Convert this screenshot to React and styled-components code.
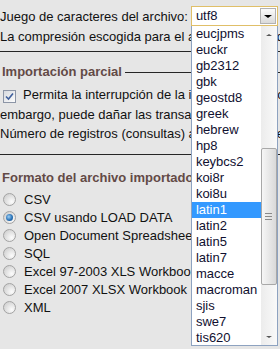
import React from 'react';
import styled, { createGlobalStyle } from 'styled-components';

const GlobalStyle = createGlobalStyle`
  html {
    overflow: hidden;
    background: #e6e6e6;
  }
  body {
    margin: 0;
    padding: 0;
    min-height: 100vh;
    font-family: "Liberation Sans", Arial, sans-serif;
    font-size: 13px;
    color: #111;
  }
`;

const Page = styled.div`
  width: 1000px;
`;

const Section = styled.div`
  border-bottom: ${({ $ruled }) => ($ruled ? '1px solid #262626' : 'none')};
  padding-bottom: ${({ $pb }) => $pb || 0}px;
`;

const CharsetRow = styled.div`
  display: flex;
  align-items: center;
  padding-top: 6px;
  height: 20px;
`;

const Line = styled.div`
  white-space: nowrap;
  line-height: 20px;
  margin-top: ${({ $mt }) => $mt || 0}px;
`;

const SelectWrap = styled.div`
  position: relative;
  width: 87px;
  height: 20px;
  margin-left: 3px;
  z-index: 2;
`;

const SelectBox = styled.div`
  box-sizing: border-box;
  height: 20px;
  border: 1px solid #e0bf68;
  background: #fff;
  display: flex;
  align-items: center;
`;

const SelectValue = styled.span`
  flex: 1;
  padding-left: 4px;
  line-height: 18px;
  color: #101030;
`;

const DropButton = styled.span`
  box-sizing: border-box;
  width: 16px;
  height: 16px;
  margin-right: 1px;
  border: 1px solid #b2b2b2;
  background: linear-gradient(#fbfbfb, #dadada);
  display: flex;
  align-items: center;
  justify-content: center;
`;

const Arrow = styled.span`
  width: 0;
  height: 0;
  border-left: ${({ $size }) => $size}px solid transparent;
  border-right: ${({ $size }) => $size}px solid transparent;
  ${({ $up, $size, $color }) =>
    $up
      ? `border-bottom: ${$size - 1}px solid ${$color};`
      : `border-top: ${$size - 1}px solid ${$color};`}
`;

const DropList = styled.div`
  position: absolute;
  top: 100%;
  left: 0;
  box-sizing: border-box;
  width: 87px;
  height: 320px;
  border: 1px solid #8da2c0;
  border-top: none;
  background: #fff;
  display: flex;
`;

const Options = styled.div`
  flex: 1;
  overflow: hidden;
`;

const Option = styled.div`
  height: 16px;
  line-height: 16px;
  padding-left: 4px;
  white-space: nowrap;
  background: ${({ $active }) => ($active ? '#3399ff' : 'transparent')};
  color: ${({ $active }) => ($active ? '#fff' : '#101030')};
`;

const ScrollBar = styled.div`
  width: 16px;
  display: flex;
  flex-direction: column;
  background: linear-gradient(to right, #ececec, #f9f9f9);
`;

const ScrollButton = styled.div`
  height: 17px;
  display: flex;
  align-items: center;
  justify-content: center;
`;

const Track = styled.div`
  flex: 1;
  padding-top: 105px;
`;

const Thumb = styled.div`
  box-sizing: border-box;
  height: 137px;
  border: 1px solid #a8a8a8;
  border-radius: 2px;
  background: linear-gradient(to right, #f6f6f6, #d9d9d9);
  display: flex;
  align-items: center;
  justify-content: center;
`;

const Grip = styled.span`
  width: 7px;
  height: 7px;
  background: repeating-linear-gradient(#8a8a8a 0 1px, transparent 1px 3px);
`;

const LegendRow = styled.div`
  display: flex;
  align-items: center;
  margin-top: ${({ $mt }) => $mt}px;
  line-height: 20px;
`;

const Legend = styled.span`
  font-weight: bold;
  color: #634a46;
  padding-left: 2px;
  white-space: nowrap;
`;

const Rule = styled.span`
  flex: 1;
  height: 1px;
  background: #262626;
  margin-left: 3px;
`;

const Paragraph = styled.div`
  white-space: nowrap;
  line-height: 19.5px;
  margin-top: 3px;
`;

const CheckBox = styled.span`
  display: inline-flex;
  align-items: center;
  justify-content: center;
  box-sizing: border-box;
  width: 13px;
  height: 13px;
  margin: 0 7px 0 3px;
  vertical-align: -2px;
  border: 1px solid #8c95a6;
  background: linear-gradient(135deg, #d6d9de, #fdfdfd);
`;

const RadioList = styled.div`
  margin-top: 2px;
`;

const RadioRow = styled.div`
  display: flex;
  align-items: center;
  height: 18px;
  white-space: nowrap;
`;

const Radio = styled.span`
  box-sizing: border-box;
  width: 13px;
  height: 13px;
  margin: 0 8px 0 3px;
  border-radius: 50%;
  border: 1px solid #a3a3a3;
  background: radial-gradient(circle at 70% 70%, #fcfcfc, #d2d2d2 80%);
  display: flex;
  align-items: center;
  justify-content: center;
  &::after {
    content: '';
    display: ${({ $checked }) => ($checked ? 'block' : 'none')};
    width: 7px;
    height: 7px;
    border-radius: 50%;
    background: radial-gradient(circle at 40% 40%, #9fd0f5, #2a73b8 55%, #17497e);
  }
`;

const charsets = [
  'eucjpms', 'euckr', 'gb2312', 'gbk', 'geostd8', 'greek', 'hebrew', 'hp8',
  'keybcs2', 'koi8r', 'koi8u', 'latin1', 'latin2', 'latin5', 'latin7',
  'macce', 'macroman', 'sjis', 'swe7', 'tis620',
];

const formats = [
  { label: 'CSV' },
  { label: 'CSV usando LOAD DATA', checked: true },
  { label: 'Open Document Spreadsheet' },
  { label: 'SQL' },
  { label: 'Excel 97-2003 XLS Workbook' },
  { label: 'Excel 2007 XLSX Workbook' },
  { label: 'XML' },
];

function CharsetSelect() {
  return (
    <SelectWrap>
      <SelectBox>
        <SelectValue>utf8</SelectValue>
        <DropButton>
          <Arrow $size={4} $color="#000" />
        </DropButton>
      </SelectBox>
      <DropList>
        <Options>
          {charsets.map((c) => (
            <Option key={c} $active={c === 'latin1'}>
              {c}
            </Option>
          ))}
        </Options>
        <ScrollBar>
          <ScrollButton>
            <Arrow $up $size={3} $color="#555" />
          </ScrollButton>
          <Track>
            <Thumb>
              <Grip />
            </Thumb>
          </Track>
          <ScrollButton>
            <Arrow $size={3} $color="#555" />
          </ScrollButton>
        </ScrollBar>
      </DropList>
    </SelectWrap>
  );
}

export default function App() {
  return (
    <Page>
      <GlobalStyle />
      <Section $ruled $pb={4}>
        <CharsetRow>
          <span>Juego de caracteres del archivo:</span>
          <CharsetSelect />
        </CharsetRow>
        <Line $mt={1}>
          La compresión escogida para el archivo importado será detectada
          automáticamente de: Ninguna, gzip, zip
        </Line>
      </Section>

      <Section $ruled $pb={10.5}>
        <LegendRow $mt={10}>
          <Legend>Importación parcial</Legend>
          <Rule />
        </LegendRow>
        <Paragraph>
          <CheckBox>
            <svg width="9" height="9" viewBox="0 0 9 9">
              <path d="M1 4.5 L3.5 7 L8 1.5" fill="none" stroke="#3f5f9c" strokeWidth="1.6" />
            </svg>
          </CheckBox>
          Permita la interrupción de la importación en caso de que el script
          detecte que está cerca del límite de tiempo. Sin
          <br />
          embargo, puede dañar las transacciones.
          <br />
          Número de registros (consultas) a saltarse desde el inicio:
        </Paragraph>
      </Section>

      <Section>
        <LegendRow $mt={13}>
          <Legend>Formato del archivo importado:</Legend>
        </LegendRow>
        <RadioList>
          {formats.map((f) => (
            <RadioRow key={f.label}>
              <Radio $checked={f.checked} />
              {f.label}
            </RadioRow>
          ))}
        </RadioList>
      </Section>
    </Page>
  );
}
